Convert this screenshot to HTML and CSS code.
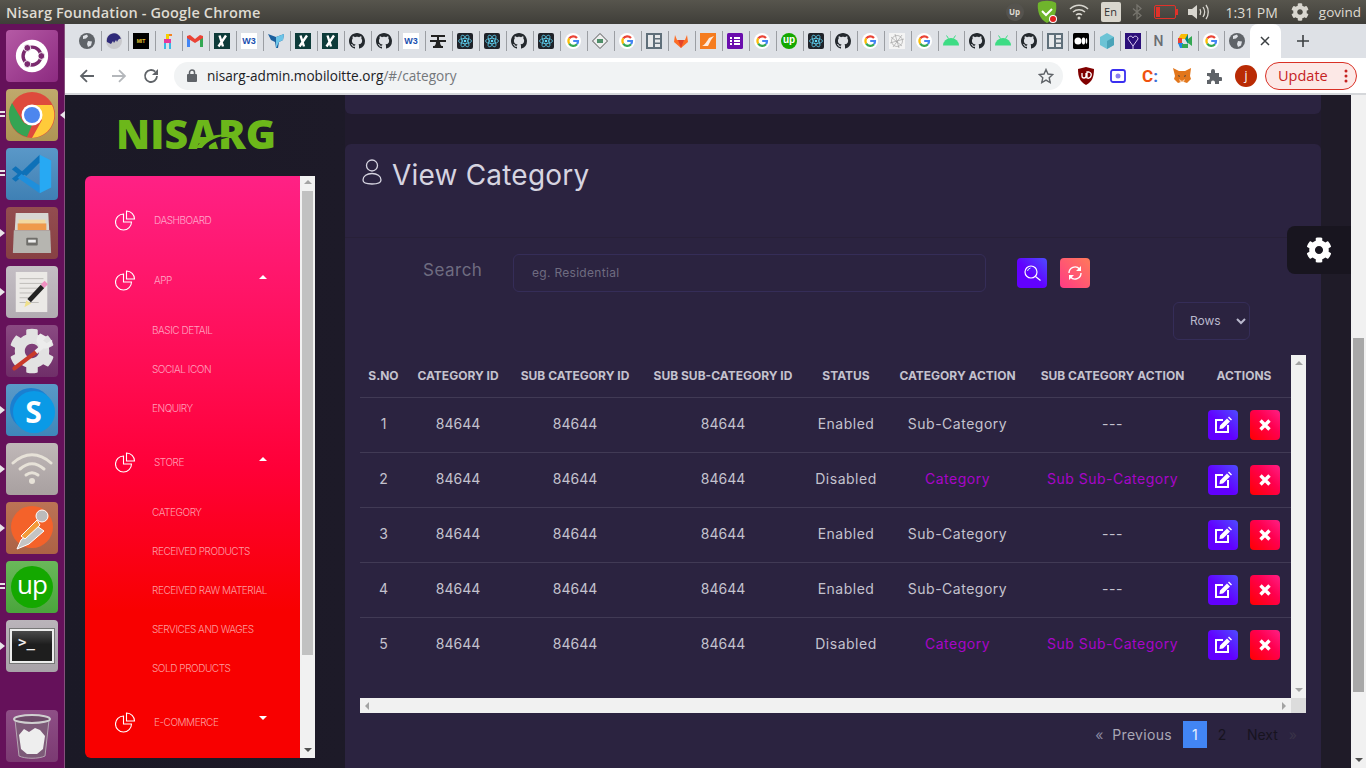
FILE: index.html
```html
<!DOCTYPE html>
<html lang="en">
<head>
  <meta charset="UTF-8" />
  <title>Nisarg Foundation</title>
  <link rel="stylesheet" href="styles.css">
</head>
<body>
  <svg class="defs" width="0" height="0">
    <symbol id="gh" viewBox="0 0 16 16"><path fill="#24292e" d="M8 0C3.58 0 0 3.58 0 8c0 3.54 2.29 6.53 5.47 7.59.4.07.55-.17.55-.38 0-.19-.01-.82-.01-1.49-2.01.37-2.53-.49-2.69-.94-.09-.23-.48-.94-.82-1.13-.28-.15-.68-.52-.01-.53.63-.01 1.08.58 1.23.82.72 1.21 1.87.87 2.33.66.07-.52.28-.87.51-1.07-1.78-.2-3.64-.89-3.64-3.95 0-.87.31-1.59.82-2.15-.08-.2-.36-1.02.08-2.12 0 0 .67-.21 2.2.82.64-.18 1.32-.27 2-.27.68 0 1.36.09 2 .27 1.53-1.04 2.2-.82 2.2-.82.44 1.1.16 1.92.08 2.12.51.56.82 1.27.82 2.15 0 3.07-1.87 3.75-3.65 3.95.29.25.54.73.54 1.48 0 1.07-.01 1.93-.01 2.2 0 .21.15.46.55.38A8.013 8.013 0 0016 8c0-4.42-3.58-8-8-8z"/></symbol>
    <symbol id="react" viewBox="0 0 16 16"><rect width="16" height="16" rx="2" fill="#20232a"/><g fill="none" stroke="#61dafb" stroke-width=".7"><ellipse cx="8" cy="8" rx="6.5" ry="2.6"/><ellipse cx="8" cy="8" rx="6.5" ry="2.6" transform="rotate(60 8 8)"/><ellipse cx="8" cy="8" rx="6.5" ry="2.6" transform="rotate(120 8 8)"/></g><circle cx="8" cy="8" r="1.3" fill="#61dafb"/></symbol>
    <symbol id="goog" viewBox="0 0 16 16"><circle cx="8" cy="8" r="8" fill="#fff"/><g fill="none" stroke-width="2.2"><path stroke="#ea4335" d="M12 5A5 5 0 0 0 4.2 5.4"/><path stroke="#fbbc05" d="M4.2 5.4a5 5 0 0 0 0 5.2"/><path stroke="#34a853" d="M4.2 10.6A5 5 0 0 0 12 11.2"/><path stroke="#4285f4" d="M12 11.2A5 5 0 0 0 13 8H8.200"/></g></symbol>
    <symbol id="xing" viewBox="0 0 16 16"><rect width="16" height="16" fill="#0d3b3a"/><path fill="none" stroke="#fff" stroke-width="2.4" d="M5.500 2.500l3.500 11M12 2.500l-7.500 11"/></symbol>
    <symbol id="droid" viewBox="0 0 16 16"><path fill="#3ddc84" d="M0 12.500a8 7.500 0 0 1 16 0z"/><path stroke="#3ddc84" d="M3.500 2.500l2 3M12.500 2.500l-2 3"/></symbol>
    <symbol id="grid" viewBox="0 0 16 16"><rect width="16" height="16" fill="#5f6f7a"/><path fill="#fff" d="M2 2h5v12H2zM9 2h5v3H9zM9 6.500h5v3H9zM9 11h5v3H9z" opacity=".85"/></symbol>
    <symbol id="globe" viewBox="0 0 16 16"><circle cx="8" cy="8" r="8" fill="#5f6368"/><path fill="#dee1e6" d="M4 3l4-1.500 1 2-2 2-3 .5zM9 8l4 .5-1 4-3 1.500-1-3z"/></symbol>
    <symbol id="pie" viewBox="0 0 21 21"><g fill="none" stroke="#fff" stroke-width="1.100"><path d="M8.500 4A8 8 0 1 0 16.500 12H8.500z"/><path d="M11.500 1A8 8 0 0 1 19.500 9H11.500z"/></g></symbol>
    <symbol id="edit" viewBox="0 0 18 18"><path fill="none" stroke="#fff" stroke-width="2" d="M9 4H2v12h12V9"/><path fill="#fff" d="M6 9.500l7-7 3 3-7 7-3.500.5zM14 1.500l1-1 3 3-1 1z"/></symbol>
    <symbol id="cross" viewBox="0 0 12 12"><path stroke="#fff" stroke-width="3.400" d="M1.500 1.500l9 9M10.500 1.500l-9 9"/></symbol>
    <symbol id="cog" viewBox="0 0 512 512"><path fill="currentColor" d="M487.4 315.7l-42.6-24.6c4.3-23.2 4.3-47 0-70.2l42.6-24.6c4.9-2.8 7.1-8.6 5.5-14-11.1-35.6-30-67.8-54.7-94.6-3.8-4.1-10-5.1-14.8-2.3L380.8 110c-17.9-15.4-38.5-27.3-60.8-35.1V25.8c0-5.6-3.900-10.500-9.400-11.700-36.700-8.200-74.300-7.800-109.200 0-5.500 1.200-9.400 6.100-9.400 11.700V75c-22.200 7.900-42.800 19.800-60.800 35.100L88.700 85.500c-4.900-2.800-11-1.900-14.800 2.300-24.700 26.700-43.600 58.900-54.700 94.600-1.700 5.400.6 11.200 5.500 14L67.300 221c-4.300 23.200-4.300 47 0 70.200l-42.600 24.600c-4.900 2.800-7.100 8.600-5.500 14 11.100 35.600 30 67.800 54.700 94.600 3.800 4.100 10 5.100 14.800 2.300l42.600-24.600c17.900 15.400 38.500 27.300 60.800 35.100v49.200c0 5.600 3.900 10.500 9.400 11.700 36.700 8.200 74.300 7.800 109.200 0 5.500-1.200 9.400-6.100 9.400-11.700v-49.200c22.200-7.900 42.800-19.800 60.800-35.100l42.600 24.600c4.900 2.800 11 1.900 14.800-2.300 24.700-26.700 43.600-58.900 54.700-94.600 1.500-5.500-.7-11.300-5.600-14.100zM256 336c-44.100 0-80-35.900-80-80s35.900-80 80-80 80 35.900 80 80-35.900 80-80 80z"/></symbol>
  </svg>

  <header class="topbar">
    <span class="win-title">Nisarg Foundation - Google Chrome</span>
    <div class="indicators">
      <span class="ind-up">Up</span>
      <svg class="ind-shield" width="24" height="24" viewBox="0 0 24 24"><path fill="#6fb52c" d="M3 3c4-3 14-3 18 0 1 7 0 15-9 20C4 19 2 10 3 3z"/><path fill="none" stroke="#fff" stroke-width="2" d="M7 11l4 4 6-6"/><circle cx="18" cy="19" r="4" fill="#fff"/><circle cx="18" cy="19" r="3" fill="#e02020"/></svg>
      <svg width="20" height="16" viewBox="0 0 20 16"><g fill="none" stroke="#d8d6cf" stroke-width="1.500"><path d="M1 5c5-5 13-5 18 0"/><path d="M4 8c3.500-3 8.500-3 12 0"/><path d="M7 11c2-1.500 4-1.500 6 0"/></g><circle cx="10" cy="14" r="1.500" fill="#d8d6cf"/></svg>
      <span class="ind-lang">En</span>
      <svg width="10" height="16" viewBox="0 0 10 16"><path fill="none" stroke="#77756e" stroke-width="1.300" d="M1 4.500l8 7-4 3.500V1l4 3.500-8 7"/></svg>
      <svg width="24" height="14" viewBox="0 0 24 14"><rect x=".5" y=".5" width="21" height="13" rx="1.500" fill="none" stroke="#e0322a"/><rect x="2" y="2" width="4" height="10" fill="#e0322a"/><rect x="22" y="4" width="2" height="6" fill="#e0322a"/></svg>
      <svg width="21" height="16" viewBox="0 0 21 16"><path fill="#d8d6cf" d="M0 5h4l5-4v14l-5-4H0z"/><g fill="none" stroke="#d8d6cf" stroke-width="1.300"><path d="M12 5c1 2 1 4 0 6"/><path d="M15 3c2 3 2 7 0 10"/><path d="M18 1c3 4 3 10 0 14"/></g></svg>
      <span class="ind-time">1:31 PM</span>
      <svg class="ind-cog" width="18" height="18"><use href="#cog"/></svg>
      <span class="ind-user">govind</span>
    </div>
  </header>

  <div class="desktop">
    <nav class="launcher">
      <div class="tile t-ubuntu"><svg width="34" height="34" viewBox="0 0 40 40"><circle cx="20" cy="20" r="19" fill="#fff"/><circle cx="20" cy="20" r="10.500" fill="none" stroke="#7a2a6e" stroke-width="4"/><g stroke="#fff" stroke-width="2"><path d="M20 20L33 20M20 20L13.500 8.700M20 20L13.500 31.300"/></g><circle cx="31" cy="20" r="4" fill="#7a2a6e" stroke="#fff"/><circle cx="14.500" cy="10.500" r="4" fill="#7a2a6e" stroke="#fff"/><circle cx="14.500" cy="29.500" r="4" fill="#7a2a6e" stroke="#fff"/></svg></div>
      <div class="tile t-chrome pip-d pip-r"><svg width="48" height="48" viewBox="0 0 48 48"><circle cx="24" cy="24" r="23" fill="#de4a3c"/><path fill="#ffcb3a" d="M24 14h20a23 23 0 0 1-20 33l10-18z"/><path fill="#35a453" d="M4 12l10 17c3 5 7 5 10 5l-5 12A23 23 0 0 1 4 12z"/><circle cx="24" cy="24" r="10.500" fill="#fff"/><circle cx="24" cy="24" r="8" fill="#4d86ee"/></svg></div>
      <div class="tile t-code pip-d"><svg width="46" height="46" viewBox="0 0 48 48"><path fill="#0e71b8" d="M3 19l4-3 10 8-10 8-4-3 6-5z"/><path fill="#0e71b8" d="M32 4L13 22l5 4L32 12z"/><path fill="#1f8fdc" d="M32 44L9 28l4-4 19 12z"/><path fill="#27a9f3" d="M32 4l12 6v28l-12 6z"/></svg></div>
      <div class="tile t-files pip-l"><svg width="42" height="44" viewBox="0 0 42 46"><path fill="#d8d7d2" d="M4 2h34l1 18H3z"/><rect x="7" y="9" width="28" height="4" fill="#f2d9a0"/><rect x="6" y="13" width="30" height="7" fill="#ef9a4b"/><path fill="#b6b5b0" d="M2 20h38l1 24H1z"/><rect x="15" y="28" width="12" height="8" rx="1" fill="#6f6e6a"/><rect x="17" y="30" width="8" height="3" fill="#eee"/></svg></div>
      <div class="tile t-edit pip-l"><svg width="42" height="44" viewBox="0 0 44 44"><rect x="5" y="1" width="33" height="42" fill="#ebe9e6"/><g stroke="#bdbbb7"><path d="M9 8h25M9 13h25M9 18h25M9 23h18M9 28h14M9 33h20"/></g><path stroke="#222" stroke-width="5" d="M19 31l14-15"/><path stroke="#ef8fc0" stroke-width="5" d="M33 16l4-4"/><path fill="#f0e08a" d="M14 38l2-7 5 3z"/></svg></div>
      <div class="tile t-tools"><svg width="46" height="46" viewBox="0 0 512 512"><use href="#cog" class="tools-cog"/><path stroke="#c93a2a" stroke-width="46" stroke-linecap="round" d="M60 450l250-190"/><path stroke="#ececec" stroke-width="46" d="M300 268l70-60"/><path fill="#ececec" d="M350 60l70 40-40 40 40 30 60-40c10 70-60 120-130 90l-40-60c-10-40 10-80 40-100z"/></svg></div>
      <div class="tile t-skype pip-l"><span class="skype-s">S</span></div>
      <div class="tile t-wifi pip-l"><svg width="42" height="32" viewBox="0 0 42 32"><g fill="none" stroke="#e7e2d8" stroke-width="3" stroke-linecap="round"><path d="M2 10c12-11 26-11 38 0"/><path d="M9 16c8-7 16-7 24 0"/><path d="M15 22c4-3 8-3 12 0"/></g><circle cx="21" cy="28" r="3" fill="#e7e2d8"/></svg></div>
      <div class="tile t-postman pip-l"><svg width="46" height="46" viewBox="0 0 46 46"><circle cx="23" cy="22" r="21" fill="#f4622a"/><path fill="#c4c4c4" stroke="#fff" d="M8 44l4-9 16-14 7 5-15 13z"/><path fill="#f39b3a" stroke="#fff" d="M12 31l16-16 3 5-15 14z"/><circle cx="33" cy="11" r="6" fill="#bbb" stroke="#fff"/></svg></div>
      <div class="tile t-upwork pip-d"><span class="up-mark">up</span></div>
      <div class="tile t-term pip-l"><div class="term-screen"><span class="term-prompt">&gt;_</span></div></div>
      <div class="tile t-trash"><svg width="38" height="46" viewBox="0 0 38 46"><path fill="#7d5a78" stroke="#b5a5b2" d="M2 7l4 36c6 3 20 3 26 0l4-36c-8 3-26 3-34 0z"/><ellipse cx="19" cy="6" rx="18" ry="4" fill="#6d4a68" stroke="#d0d0d0" stroke-width="2"/><path fill="#eee" d="M6 22l5-6 5 3 6-4 5 2 5 6-2 13-6 5-10 0-6-5z"/></svg></div>
    </nav>

    <div class="browser">
      <div class="tabstrip">
        <div class="tabs">
          <div class="tab"><svg class="fav"><use href="#globe"/></svg></div>
          <div class="tab"><svg class="fav" viewBox="0 0 16 16"><circle cx="8" cy="8" r="8" fill="#c8c8cc"/><path fill="#2f2a7a" d="M1 9a7 7 0 0 1 14-3c-2-1-3 1-4 3l-1-2-2 3-1-2-2 3z"/></svg></div>
          <div class="tab"><span class="fav fav-black">MIT</span></div>
          <div class="tab"><svg class="fav" viewBox="0 0 16 16"><path fill="#f5d000" d="M6 1h3v5H6z"/><path fill="#e6399b" d="M4 6h7v4H4z"/><path fill="#39b6e6" d="M4 10h2v6H4zM9 10h2v6H9z"/><path fill="#f58220" d="M9 1h3v2H9z"/></svg></div>
          <div class="tab"><svg class="fav" viewBox="0 0 16 16"><path fill="#4285f4" d="M0 3h3v11H0z"/><path fill="#34a853" d="M13 3h3v11h-3z"/><path fill="#ea4335" d="M0 3l3-1 5 4 5-4 3 1v2L8 10 0 5z"/></svg></div>
          <div class="tab"><svg class="fav"><use href="#xing"/></svg></div>
          <div class="tab"><span class="fav fav-w3">W3</span></div>
          <div class="tab"><svg class="fav" viewBox="0 0 16 16"><path fill="#1b5f9e" d="M0 1l8 3 8-3-1 6-4 2-1 6-2 0-1-6-4-2z"/><path fill="#6cc5e8" d="M8 4l8-3-1 6-4 2-3 6z"/></svg></div>
          <div class="tab"><svg class="fav"><use href="#xing"/></svg></div>
          <div class="tab"><svg class="fav"><use href="#xing"/></svg></div>
          <div class="tab"><svg class="fav"><use href="#gh"/></svg></div>
          <div class="tab"><svg class="fav"><use href="#gh"/></svg></div>
          <div class="tab"><span class="fav fav-w3">W3</span></div>
          <div class="tab"><svg class="fav" viewBox="0 0 16 16"><path fill="#222" d="M0 7h16v2H0zM1 2h14v2H1zM7 4h2v3H7zM3 13h10v2H3zM6 9c0 2-1 4-2 4h8c-1 0-2-2-2-4z"/></svg></div>
          <div class="tab"><svg class="fav"><use href="#react"/></svg></div>
          <div class="tab"><svg class="fav"><use href="#react"/></svg></div>
          <div class="tab"><svg class="fav"><use href="#gh"/></svg></div>
          <div class="tab"><svg class="fav"><use href="#react"/></svg></div>
          <div class="tab"><svg class="fav"><use href="#goog"/></svg></div>
          <div class="tab"><svg class="fav" viewBox="0 0 16 16"><path fill="#eee" stroke="#555" d="M8 .5L15.500 8 8 15.500.5 8z"/><path fill="#4f8f6a" d="M5 6h6v4H5z"/></svg></div>
          <div class="tab"><svg class="fav"><use href="#goog"/></svg></div>
          <div class="tab"><svg class="fav"><use href="#grid"/></svg></div>
          <div class="tab"><svg class="fav" viewBox="0 0 16 16"><path fill="#fc6d26" d="M8 15L1 9l1-7 2 5h8l2-5 1 7z"/><path fill="#e24329" d="M8 15L5 7h6z"/></svg></div>
          <div class="tab"><svg class="fav" viewBox="0 0 16 16"><rect width="16" height="16" fill="#f57c1f"/><path fill="#fff" d="M2 13c3-1 5-5 7-8l5-2-3 4-3 6z" opacity=".85"/></svg></div>
          <div class="tab"><svg class="fav" viewBox="0 0 16 16"><rect width="16" height="16" rx="1.500" fill="#6a0dad"/><path fill="#fff" d="M3 4h2v2H3zM7 4h6v2H7zM3 7h2v2H3zM7 7h6v2H7zM3 10h2v2H3zM7 10h6v2H7z"/></svg></div>
          <div class="tab"><svg class="fav"><use href="#goog"/></svg></div>
          <div class="tab"><span class="fav fav-up">up</span></div>
          <div class="tab"><svg class="fav"><use href="#react"/></svg></div>
          <div class="tab"><svg class="fav"><use href="#gh"/></svg></div>
          <div class="tab"><svg class="fav"><use href="#goog"/></svg></div>
          <div class="tab"><svg class="fav" viewBox="0 0 16 16"><rect width="16" height="16" fill="#f4f4f4"/><g fill="none" stroke="#999" stroke-width=".6"><circle cx="8" cy="8" r="5.500"/><path d="M2 4l11 9M13 2L4 14M1 10l14-4M6 1l4 14"/></g></svg></div>
          <div class="tab"><svg class="fav"><use href="#goog"/></svg></div>
          <div class="tab"><svg class="fav"><use href="#droid"/></svg></div>
          <div class="tab"><svg class="fav"><use href="#gh"/></svg></div>
          <div class="tab"><svg class="fav"><use href="#droid"/></svg></div>
          <div class="tab"><svg class="fav"><use href="#gh"/></svg></div>
          <div class="tab"><svg class="fav"><use href="#grid"/></svg></div>
          <div class="tab"><svg class="fav" viewBox="0 0 16 16"><rect width="16" height="16" rx="1.500" fill="#000"/><circle cx="5" cy="8" r="3.500" fill="#fff"/><ellipse cx="10.500" cy="8" rx="1.800" ry="3.400" fill="#fff"/><ellipse cx="13.500" cy="8" rx=".8" ry="3" fill="#fff"/></svg></div>
          <div class="tab"><svg class="fav" viewBox="0 0 16 16"><path fill="#6cc3d5" d="M8 0l7 4v8l-7 4-7-4V4z"/><path fill="#4aa3b8" d="M8 8l7-4v8l-7 4z"/></svg></div>
          <div class="tab"><svg class="fav" viewBox="0 0 16 16"><rect width="16" height="16" fill="#2b0f7a"/><path fill="none" stroke="#d8c8f0" d="M8 13L3 6c0-3 4-4 5-1 1-3 5-2 5 1zM8 13v3"/></svg></div>
          <div class="tab"><span class="fav fav-n">N</span></div>
          <div class="tab"><svg class="fav" viewBox="0 0 16 16"><path fill="#fbbc04" d="M4 1h7v5H1z"/><path fill="#ea4335" d="M1 5h4v6H1z"/><path fill="#1e88e5" d="M1 10h5v5H3z"/><path fill="#34a853" d="M5 11h6v4H5zM11 6l4-3v10l-4-3z"/><path fill="#00897b" d="M11 1v10l-3-5z"/></svg></div>
          <div class="tab"><svg class="fav"><use href="#goog"/></svg></div>
          <div class="tab"><svg class="fav"><use href="#globe"/></svg></div>
        </div>
        <div class="tab-active"><svg width="10" height="10" viewBox="0 0 10 10"><path stroke="#3c4043" stroke-width="1.500" d="M1 1l8 8M9 1L1 9"/></svg></div>
        <svg class="new-tab" width="12" height="12" viewBox="0 0 12 12"><path stroke="#3c4043" stroke-width="1.600" d="M6 0v12M0 6h12"/></svg>
      </div>

      <div class="toolbar">
        <svg class="nav-ic" width="16" height="16" viewBox="0 0 16 16"><path fill="none" stroke="#5f6368" stroke-width="1.800" d="M15 8H2M8 2L2 8l6 6"/></svg>
        <svg class="nav-ic" width="16" height="16" viewBox="0 0 16 16"><path fill="none" stroke="#b4b7bb" stroke-width="1.800" d="M1 8h13M8 2l6 6-6 6"/></svg>
        <svg class="nav-ic" width="16" height="16" viewBox="0 0 16 16"><path fill="none" stroke="#5f6368" stroke-width="1.800" d="M14 8a6 6 0 1 1-1.800-4.300"/><path fill="#5f6368" d="M15 1v6H9z"/></svg>
        <div class="omnibox">
          <svg width="10" height="13" viewBox="0 0 10 13"><rect y="5" width="10" height="8" rx="1" fill="#5f6368"/><path fill="none" stroke="#5f6368" stroke-width="1.500" d="M2.500 5V3.500a2.500 2.500 0 0 1 5 0V5"/></svg>
          <span class="url"><b>nisarg-admin.mobiloitte.org</b>/#/category</span>
          <svg class="star" width="16" height="16" viewBox="0 0 16 16"><path fill="none" stroke="#5f6368" stroke-width="1.400" d="M8 1.500l2 4.500 4.800.5-3.600 3.200 1 4.800L8 12.100l-4.200 2.400 1-4.800L1.200 6.500 6 6z"/></svg>
        </div>
        <div class="exts">
          <span class="ext"><svg width="16" height="18" viewBox="0 0 16 18"><path fill="#800000" d="M8 0l8 2c0 8-2 13-8 16C2 15 0 10 0 2z"/><path fill="none" stroke="#fff" stroke-width="1.300" d="M4 6v3a2 2 0 0 0 4 0V6M9 5v6a2 2 0 0 0 2-6z"/></svg></span>
          <span class="ext"><svg width="16" height="16" viewBox="0 0 16 16"><rect x="1" y="2" width="14" height="12" rx="2" fill="none" stroke="#3a2ff0" stroke-width="1.800"/><circle cx="8" cy="8" r="2.500" fill="#8a7ff0"/></svg></span>
          <span class="ext ext-c">C<i>:</i></span>
          <span class="ext"><svg width="18" height="17" viewBox="0 0 18 17"><path fill="#e2761b" d="M0 1l6 3h6l6-3-1 8 1 3-4 4-3-1H8l-3 1-4-4 1-3z"/><path fill="#f6c8a0" d="M6 12l3 2 3-2-1 3H7z"/><path fill="#233447" d="M5 8l2 1-1 1zM13 8l-2 1 1 1z"/></svg></span>
          <span class="ext"><svg width="16" height="16" viewBox="0 0 16 16"><path fill="#5f6368" d="M1 5h4V3a2 2 0 0 1 4 0v2h4v4h1.500a2 2 0 0 1 0 4H13v3H9v-1.500a2 2 0 0 0-4 0V16H1v-4h1a2 2 0 0 0 0-4H1z"/></svg></span>
          <span class="ext"><span class="avatar">j</span></span>
          <span class="update">Update<svg width="4" height="14" viewBox="0 0 4 14"><g fill="#c5221f"><circle cx="2" cy="2" r="1.500"/><circle cx="2" cy="7" r="1.500"/><circle cx="2" cy="12" r="1.500"/></g></svg></span>
        </div>
      </div>

      <div class="page">
        <aside class="side">
          <div class="logo">NISARG<svg class="swoosh" width="34" height="18" viewBox="0 0 34 18"><path fill="#1c1a28" d="M2 18C8 10 18 7 33 7 22 10 15 13 11 18z"/><path fill="#6cb71a" d="M0 18C7 7 20 3 34 5 22 6 12 10 6 18z"/></svg></div>
          <div class="panel">
            <div class="menu">
              <a class="menu-item"><svg class="pie"><use href="#pie"/></svg>Dashboard</a>
              <a class="menu-item"><svg class="pie"><use href="#pie"/></svg>App<i class="caret"></i></a>
              <ul class="submenu">
                <li>Basic Detail</li>
                <li>Social Icon</li>
                <li>Enquiry</li>
              </ul>
              <a class="menu-item"><svg class="pie"><use href="#pie"/></svg>Store<i class="caret"></i></a>
              <ul class="submenu">
                <li>Category</li>
                <li>Received Products</li>
                <li>Received Raw Material</li>
                <li>Services and Wages</li>
                <li>Sold Products</li>
              </ul>
              <a class="menu-item"><svg class="pie"><use href="#pie"/></svg>E-Commerce<i class="caret down"></i></a>
            </div>
            <div class="scroll-v panel-scroll">
              <i class="arr up"></i><div class="thumb"></div><i class="arr dn"></i>
            </div>
          </div>
        </aside>

        <main class="content">
          <div class="card card-top"></div>
          <section class="card card-main">
            <div class="card-head">
              <svg width="20" height="26" viewBox="0 0 20 26"><g fill="none" stroke="#d6d4e0" stroke-width="1.300"><circle cx="10" cy="6.500" r="5.500"/><path d="M1 21c0-4 4-6.500 9-6.500s9 2.500 9 6.500c0 3-3 4-9 4s-9-1-9-4z"/></g></svg>
              <h2>View Category</h2>
            </div>
            <div class="search-row">
              <label class="search-label">Search</label>
              <input class="search-input" placeholder="eg. Residential">
              <button class="sq-btn btn-blue"><svg width="18" height="18" viewBox="0 0 18 18"><circle cx="8" cy="8" r="6" fill="none" stroke="#fff" stroke-width="1.200"/><path stroke="#fff" stroke-width="1.200" d="M12.500 12.500l5 4"/><path fill="none" stroke="#cfe" d="M4.500 7a4 4 0 0 1 3-3"/></svg></button>
              <button class="sq-btn btn-orange"><svg width="16" height="16" viewBox="0 0 16 16"><g fill="none" stroke="#fff" stroke-width="1.400"><path d="M2 8a6 6 0 0 1 10.500-4"/><path d="M14 8a6 6 0 0 1-10.500 4"/></g><path fill="#fff" d="M14 1v5H9zM2 15v-5h5z"/></svg></button>
            </div>
            <div class="rows-row">
              <select class="rows-select"><option>Rows</option></select>
            </div>
            <div class="table-box">
              <div class="table-view">
                <table class="grid">
                  <colgroup>
                    <col class="c1"><col class="c2"><col class="c3"><col class="c4"><col class="c5"><col class="c6"><col class="c7"><col class="c8">
                  </colgroup>
                  <thead>
                    <tr><th>S.NO</th><th>CATEGORY ID</th><th>SUB CATEGORY ID</th><th>SUB SUB-CATEGORY ID</th><th>STATUS</th><th>CATEGORY ACTION</th><th>SUB CATEGORY ACTION</th><th>ACTIONS</th></tr>
                  </thead>
                  <tbody>
                    <tr><td>1</td><td>84644</td><td>84644</td><td>84644</td><td>Enabled</td><td>Sub-Category</td><td>---</td><td><div class="acts"><button class="sq-btn btn-blue"><svg width="18" height="18"><use href="#edit"/></svg></button><button class="sq-btn btn-red"><svg width="12" height="12"><use href="#cross"/></svg></button></div></td></tr>
                    <tr><td>2</td><td>84644</td><td>84644</td><td>84644</td><td>Disabled</td><td class="link">Category</td><td class="link">Sub Sub-Category</td><td><div class="acts"><button class="sq-btn btn-blue"><svg width="18" height="18"><use href="#edit"/></svg></button><button class="sq-btn btn-red"><svg width="12" height="12"><use href="#cross"/></svg></button></div></td></tr>
                    <tr><td>3</td><td>84644</td><td>84644</td><td>84644</td><td>Enabled</td><td>Sub-Category</td><td>---</td><td><div class="acts"><button class="sq-btn btn-blue"><svg width="18" height="18"><use href="#edit"/></svg></button><button class="sq-btn btn-red"><svg width="12" height="12"><use href="#cross"/></svg></button></div></td></tr>
                    <tr><td>4</td><td>84644</td><td>84644</td><td>84644</td><td>Enabled</td><td>Sub-Category</td><td>---</td><td><div class="acts"><button class="sq-btn btn-blue"><svg width="18" height="18"><use href="#edit"/></svg></button><button class="sq-btn btn-red"><svg width="12" height="12"><use href="#cross"/></svg></button></div></td></tr>
                    <tr><td>5</td><td>84644</td><td>84644</td><td>84644</td><td>Disabled</td><td class="link">Category</td><td class="link">Sub Sub-Category</td><td><div class="acts"><button class="sq-btn btn-blue"><svg width="18" height="18"><use href="#edit"/></svg></button><button class="sq-btn btn-red"><svg width="12" height="12"><use href="#cross"/></svg></button></div></td></tr>
                  </tbody>
                </table>
              </div>
              <div class="table-vbar"><i class="arr up"></i><i class="arr dn"></i></div>
              <div class="table-hbar"><i class="arr lf"></i><i class="arr rt"></i></div>
              <div class="table-corner"></div>
            </div>
            <div class="pager">
              <span class="pg-arrow">«</span>
              <a class="pg-prev">Previous</a>
              <a class="pg-num active">1</a>
              <a class="pg-num">2</a>
              <a class="pg-next">Next</a>
              <span class="pg-arrow end">»</span>
            </div>
          </section>
          <div class="gear-tab"><svg width="26" height="26"><use href="#cog"/></svg></div>
        </main>

        <div class="scroll-v page-scroll">
          <div class="thumb"></div><i class="arr dn"></i>
        </div>
      </div>
    </div>
  </div>
</body>
</html>
```

FILE: styles.css
```css
:root {
  --card: #2b2340;
  --page: #211b2e;
  --muted: #c4c2ce;
  --purple: #a805c9;
}

* {
  box-sizing: border-box;
}

html, body {
  margin: 0;
  height: 100%;
  overflow: hidden;
}

body {
  width: 1366px;
  height: 768px;
  display: flex;
  flex-direction: column;
  font-family: "Inter", "Noto Sans", sans-serif;
}

.defs {
  position: absolute;
}

/* desktop top bar */
.topbar {
  height: 24px;
  display: flex;
  align-items: center;
  justify-content: space-between;
  padding: 0 5px 0 6px;
  background: linear-gradient(#57554d, #3f3e39);
  color: #dfdbd2;
  font-family: "Open Sans", sans-serif;
}

.win-title {
  font-size: 14.500px;
  font-weight: 600;
  letter-spacing: .15px;
}

.indicators {
  display: flex;
  align-items: center;
}

.ind-up {
  width: 18px;
  height: 18px;
  border-radius: 50%;
  background: #55534e;
  font-size: 8px;
  font-weight: 700;
  line-height: 18px;
  text-align: center;
}

.ind-shield {
  margin-left: 11px;
}

.indicators > svg:nth-child(3) {
  margin-left: 10px;
}

.ind-lang {
  width: 20px;
  height: 20px;
  margin-left: 12px;
  background: #d9d6cd;
  color: #333;
  border-radius: 2px;
  font-size: 11px;
  line-height: 20px;
  text-align: center;
}

.indicators > svg:nth-child(5) {
  margin-left: 11px;
}

.indicators > svg:nth-child(6) {
  margin-left: 12px;
}

.indicators > svg:nth-child(7) {
  margin-left: 10px;
}

.ind-time {
  margin-left: 17px;
  font-size: 14px;
}

.ind-cog {
  margin-left: 13px;
  color: #d8d6cf;
}

.ind-user {
  margin-left: 10px;
  font-size: 13.500px;
}

.desktop {
  flex: 1;
  display: flex;
  min-height: 0;
}

/* launcher */
.launcher {
  width: 65px;
  flex: none;
  display: flex;
  flex-direction: column;
  gap: 7px;
  padding: 6px 0 6px 6px;
  background: #65115a;
  border-right: 1px solid #85507c;
}

.tile {
  position: relative;
  width: 52px;
  height: 52px;
  flex: none;
  display: flex;
  align-items: center;
  justify-content: center;
  border-radius: 4px;
}

.pip-l::before {
  content: "";
  position: absolute;
  left: -6px;
  top: 22px;
  border: 4px solid transparent;
  border-left: 5px solid #e8e4e8;
}

.pip-d::before {
  content: "";
  position: absolute;
  left: -6px;
  top: 22px;
  width: 5px;
  height: 2px;
  background: #e8e4e8;
  box-shadow: 0 4px 0 #e8e4e8;
}

.pip-r::after {
  content: "";
  position: absolute;
  right: -7px;
  top: 22px;
  border: 4px solid transparent;
  border-right: 5px solid #e8e4e8;
}

.t-ubuntu { background: linear-gradient(135deg, #b55aa5, #8c2a80); }
.t-chrome { background: linear-gradient(#c0a96c, #ae9554); }
.t-code { background: linear-gradient(#5a98c8, #3f80b4); }
.t-files { background: linear-gradient(#934d50, #874043); }
.t-edit { background: linear-gradient(#c4bec4, #b2acb2); }
.t-tools { background: linear-gradient(#8a4a82, #6f2e68); }
.t-skype { background: linear-gradient(#5a9ac8, #3f86ba); }
.t-wifi { background: linear-gradient(#c0b8b8, #a8a0a0); }
.t-postman { background: linear-gradient(#bb7355, #ac6245); }
.t-upwork { background: linear-gradient(#6ab85a, #4aa53c); }
.t-term { background: linear-gradient(#bab4ba, #a8a2a8); }
.t-trash { background: linear-gradient(#8e4f86, #7b3a72); margin-top: auto; }

.tools-cog {
  color: #e2e2e2;
}

.skype-s {
  width: 42px;
  height: 42px;
  border-radius: 50%;
  background: #0a9ae6;
  box-shadow: -3px -3px 0 #1a7fd0;
  margin: 3px 0 0 3px;
  color: #fff;
  font: 700 30px/42px "Open Sans", sans-serif;
  text-align: center;
}

.up-mark {
  width: 42px;
  height: 42px;
  border-radius: 50%;
  background: #14a800;
  color: #fff;
  font: 400 26px/36px "Open Sans", sans-serif;
  letter-spacing: -1px;
  text-align: center;
}

.term-screen {
  width: 44px;
  height: 34px;
  padding: 2px 6px;
  background: linear-gradient(#4a4a4a, #1e1e1e 45%);
  border: 2px solid #ececec;
  outline: 1px solid #777;
}

.term-prompt {
  display: block;
  color: #eee;
  font: 700 14px/18px "DejaVu Sans Mono", monospace;
}

/* browser chrome */
.browser {
  flex: 1;
  display: flex;
  flex-direction: column;
  min-width: 0;
}

.tabstrip {
  height: 34px;
  flex: none;
  display: flex;
  align-items: center;
  padding-left: 8.500px;
  background: #dee1e6;
}

.tabs {
  height: 100%;
  flex: none;
  display: flex;
}

.tab {
  width: 27px;
  flex: none;
  display: flex;
  align-items: center;
  justify-content: center;
  position: relative;
}

.tab:nth-child(n+33) {
  width: 26px;
}

.tab + .tab::before {
  content: "";
  position: absolute;
  left: 0;
  top: 7px;
  height: 20px;
  width: 1px;
  background: #9b9ea3;
}

.fav {
  width: 16px;
  height: 16px;
  display: block;
}

.fav-black {
  background: #000;
  color: #e8c83a;
  font: 700 5px/16px "Liberation Sans", sans-serif;
  text-align: center;
}

.fav-w3 {
  background: #fff;
  color: #1a4fb0;
  font: 700 9px/16px "Liberation Sans", sans-serif;
  text-align: center;
}

.fav-up {
  border-radius: 50%;
  background: #14a800;
  color: #fff;
  font: 700 10px/14px "Liberation Sans", sans-serif;
  text-align: center;
}

.fav-n {
  color: #6a6d72;
  font: 500 14px/16px "Roboto", sans-serif;
  text-align: center;
}

.tab-active {
  width: 31px;
  height: 34px;
  display: flex;
  align-items: center;
  justify-content: center;
  background: #fff;
  border-radius: 8px 8px 0 0;
}

.new-tab {
  margin-left: 16px;
}

.toolbar {
  height: 37px;
  flex: none;
  display: flex;
  align-items: center;
  padding: 0 9px 0 14px;
  background: #fff;
  border-bottom: 2px solid #d5d7da;
}

.nav-ic {
  margin-right: 16px;
}

.omnibox {
  width: 891px;
  height: 28px;
  margin-left: -1px;
  display: flex;
  align-items: center;
  padding: 0 9px 0 13px;
  background: #f1f3f4;
  border-radius: 14px;
}

.url {
  margin-left: 10px;
  color: #74777b;
  font: 13.600px "Open Sans", sans-serif;
}

.url b {
  color: #202124;
  font-weight: 400;
}

.star {
  margin-left: auto;
}

.exts {
  flex: 1;
  display: flex;
  align-items: center;
  padding-left: 7px;
}

.ext {
  width: 32px;
  flex: none;
  display: flex;
  align-items: center;
  justify-content: center;
}

.ext-c {
  color: #f0520e;
  font: 700 17px "Roboto", sans-serif;
}

.ext-c i {
  color: #3a6ed8;
  font-style: normal;
}

.avatar {
  width: 22px;
  height: 22px;
  border-radius: 50%;
  background: #b92b04;
  color: #fff;
  font: 12px/22px "Open Sans", sans-serif;
  text-align: center;
}

.update {
  width: 92px;
  height: 28px;
  display: flex;
  align-items: center;
  justify-content: space-between;
  padding: 0 8px 0 12px;
  margin-left: 3px;
  background: #fce8e6;
  border: 1px solid #d93025;
  border-radius: 14px;
  color: #c5221f;
  font: 500 14.500px "Open Sans", sans-serif;
}

/* page */
.page {
  flex: 1;
  display: flex;
  min-height: 0;
  background: linear-gradient(90deg, #1b1926, #1d1a28 280px, var(--page) 280px, var(--page) 1256px, #1f1b28 1256px);
}

.side {
  width: 280px;
  flex: none;
  padding: 20px 0 0 20px;
}

.logo {
  position: relative;
  width: 190px;
  height: 61px;
  padding-left: 31px;
  color: #6cb71a;
  font: 800 41px/36px "Open Sans", sans-serif;
}

.swoosh {
  position: absolute;
  left: 111px;
  top: 15px;
}

.panel {
  width: 230px;
  height: 582px;
  display: flex;
}

.menu {
  width: 215px;
  padding-top: 14px;
  background: linear-gradient(#ff2185, #ff0b50 35%, #ff0038 50%, #f80000 75%, #f80000);
  border-radius: 6px 0 0 6px;
  color: rgba(255, 255, 255, .62);
  font-size: 10px;
  font-weight: 300;
  letter-spacing: -.45px;
  text-transform: uppercase;
}

.menu-item {
  position: relative;
  height: 60px;
  display: flex;
  align-items: center;
  padding-left: 30px;
}

.pie {
  width: 21px;
  height: 21px;
  margin-right: 18px;
  flex: none;
}

.caret {
  position: absolute;
  left: 174px;
  top: 25px;
  border: 4px solid transparent;
  border-top: 0;
  border-bottom: 4px solid #fff;
}

.caret.down {
  top: 24px;
  border: 4px solid transparent;
  border-bottom: 0;
  border-top: 4px solid #fff;
}

.submenu {
  margin: 1px 0 4px;
  padding: 0 0 0 67px;
  list-style: none;
}

.submenu li {
  height: 39px;
  line-height: 39px;
}

/* fake scrollbars */
.scroll-v {
  width: 15px;
  flex: none;
  display: flex;
  flex-direction: column;
  align-items: center;
  background: #f1f1f1;
}

.thumb {
  width: 11px;
  background: #c1c1c1;
}

.panel-scroll .thumb {
  height: 464px;
  margin-top: 7px;
}

.panel-scroll .arr.up {
  margin-top: 4px;
}

.arr {
  display: block;
  width: 0;
  height: 0;
  border: 4px solid transparent;
}

.arr.up {
  border-top: 0;
  border-bottom: 4px solid #a3a3a3;
}

.arr.dn {
  margin-top: auto;
  margin-bottom: 6px;
  border-bottom: 0;
  border-top: 4px solid #505050;
}

.arr.lf {
  border-left: 0;
  border-right: 4px solid #a3a3a3;
}

.arr.rt {
  margin-left: auto;
  border-right: 0;
  border-left: 4px solid #a3a3a3;
}

.page-scroll .thumb {
  height: 354px;
  margin-top: 243px;
  background: #a8a8a8;
}

.table-vbar .arr.dn {
  border-top-color: #a3a3a3;
}

.content {
  position: relative;
  flex: none;
  width: 1006px;
  padding-right: 30px;
  display: flex;
  flex-direction: column;
}

.card {
  background: var(--card);
}

.card-top {
  height: 19px;
  margin-bottom: 30px;
  border-radius: 0 0 6px 6px;
}

.card-main {
  flex: 1;
  border-radius: 6px 6px 0 0;
}

.card-head {
  height: 94px;
  display: flex;
  align-items: flex-start;
  gap: 10px;
  padding: 15px 0 0 17px;
  border-bottom: 1px solid #282038;
}

.card-head h2 {
  margin: 0;
  color: #d6d4e0;
  font-size: 28px;
  font-weight: 400;
  letter-spacing: .2px;
  line-height: 32px;
}

.search-row {
  display: flex;
  align-items: center;
  height: 38px;
  margin-top: 16px;
  padding-left: 78px;
}

.search-label {
  width: 90px;
  margin-top: -6px;
  color: #6f6c80;
  font-size: 17px;
  letter-spacing: .5px;
}

.search-input {
  width: 473px;
  height: 38px;
  margin-right: 31px;
  padding: 0 18px 2px;
  background: transparent;
  border: 1px solid #352d58;
  border-radius: 6px;
  font: 12px "Inter", sans-serif;
  letter-spacing: .3px;
  color: #ccc;
}

.search-input::placeholder {
  color: #6f6c80;
}

.sq-btn {
  width: 30px;
  height: 30px;
  padding: 0;
  display: flex;
  align-items: center;
  justify-content: center;
  border: 0;
  border-radius: 4px;
}

.btn-blue {
  background: linear-gradient(225deg, #4d4dff, #6200ff 55%);
}

.btn-orange {
  margin-left: 13px;
  background: linear-gradient(45deg, #ff3a85, #ff7a5a);
}

.btn-red {
  background: linear-gradient(45deg, #ff0000, #ff0050 60%, #ff1f85);
}

.rows-row {
  display: flex;
  justify-content: flex-end;
  padding-right: 71px;
  margin-top: 10px;
}

.rows-select {
  width: 77px;
  height: 38px;
  padding: 0 0 2px 12px;
  background: transparent;
  border: 1px solid #352d58;
  border-radius: 6px;
  color: #b9b8cc;
  font: 12px "Inter", sans-serif;
}

.table-box {
  width: 946px;
  height: 358px;
  margin: 15px 0 0 15px;
  display: grid;
  grid-template-columns: 931px 15px;
  grid-template-rows: 343px 15px;
}

.table-view {
  overflow: hidden;
}

.grid {
  width: 931px;
  border-collapse: collapse;
  table-layout: fixed;
  text-align: center;
}

.c1 { width: 47px; }
.c2 { width: 102px; }
.c3 { width: 132px; }
.c4 { width: 164px; }
.c5 { width: 82px; }
.c6 { width: 141px; }
.c7 { width: 169px; }
.c8 { width: 94px; }

.grid th {
  height: 42px;
  padding: 0;
  border-bottom: 1px solid #413a55;
  color: var(--muted);
  font-size: 12px;
  font-weight: 700;
  white-space: nowrap;
}

.grid td {
  height: 55px;
  padding: 0 0 2px;
  border-bottom: 1px solid #413a55;
  color: var(--muted);
  font-size: 14px;
}

.grid td:nth-child(n+5) {
  letter-spacing: .5px;
}

.grid td:last-child {
  padding: 0;
}

.grid tr:last-child td {
  border-bottom: 0;
}

.grid td.link {
  color: var(--purple);
}

.acts {
  display: flex;
  justify-content: center;
  gap: 12px;
}

.table-vbar {
  display: flex;
  flex-direction: column;
  align-items: center;
  padding-top: 6px;
  background: #f1f1f1;
}

.table-hbar {
  display: flex;
  align-items: center;
  padding: 0 5px;
  background: #f1f1f1;
}

.table-corner {
  background: #dcdcdc;
}

.pager {
  display: flex;
  align-items: center;
  height: 27px;
  margin: 8px 0 0;
  padding-right: 24px;
  justify-content: flex-end;
  color: #a9a7b5;
  font-size: 14px;
}

.pg-prev {
  margin-left: 9px;
  color: #a9a7b5;
  letter-spacing: .3px;
}

.pg-num {
  width: 24px;
  height: 27px;
  margin-left: 11px;
  color: #17131f;
  line-height: 27px;
  text-align: center;
}

.pg-num.active {
  background: #4285f4;
  color: #e8f0ff;
}

.pg-num + .pg-num {
  margin-left: 3px;
}

.pg-next {
  margin-left: 13px;
  color: #17131f;
}

.pg-arrow {
  color: #8a88a0;
  font-size: 14px;
}

.pg-arrow.end {
  margin-left: 11px;
  color: #3a3448;
}

.gear-tab {
  position: absolute;
  top: 131px;
  right: 0;
  width: 64px;
  height: 48px;
  display: flex;
  align-items: center;
  justify-content: center;
  background: #18151f;
  border-radius: 8px 0 0 8px;
  color: #fff;
}
```
